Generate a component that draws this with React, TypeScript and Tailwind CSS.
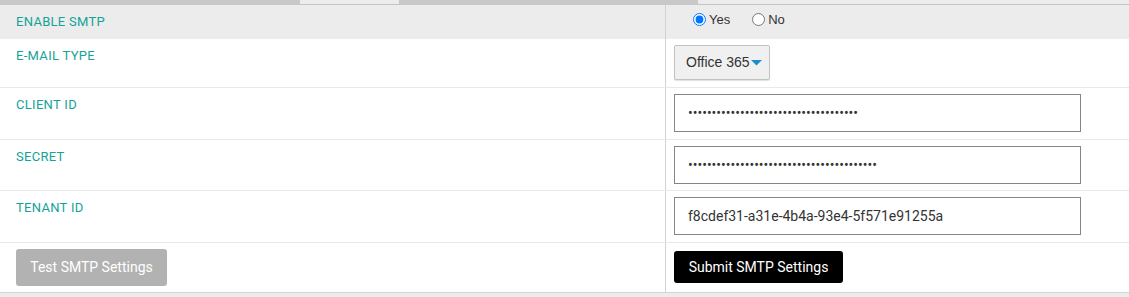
import React from "react";

const labelCls =
  "font-['Roboto',sans-serif] text-[13px] leading-[19px] tracking-[0.3px] text-[#14a398] uppercase";

function Row({
  h,
  bg,
  border,
  label,
  children,
  rightPt,
}: {
  h: string;
  bg?: string;
  border?: boolean;
  label?: string;
  children?: React.ReactNode;
  rightPt: string;
}) {
  return (
    <div className={`flex ${h} ${bg ?? ""} ${border ? "border-b border-[#e9e9e9]" : ""}`}>
      <div className="w-[666px] shrink-0 border-r border-[#d2d2d2] pl-4 pt-[7px]">
        {label && <div className={labelCls}>{label}</div>}
      </div>
      <div className={`flex-1 pl-2 ${rightPt}`}>{children}</div>
    </div>
  );
}

export default function App() {
  const inputCls =
    "block w-[407px] h-[38px] border border-[#858585] bg-white px-[13px] font-['Roboto',sans-serif] text-[14px] text-[#333] outline-none";
  return (
    <div className="w-[1129px] h-[297px] bg-[#ececec] overflow-hidden font-['Roboto',sans-serif]">
      <div className="flex h-[5px]">
        <div className="w-[300px] bg-[#c8c8c8]" />
        <div className="w-[99px] bg-[#ececec] border-b border-[#c4c4c4]" />
        <div className="w-[299px] bg-[#c8c8c8]" />
        <div className="flex-1 bg-[#ececec] border-b border-[#c4c4c4]" />
      </div>
      <div className="bg-white border-b border-[#d4d4d4]">
        <Row h="h-[34px]" bg="bg-[#ececec]" label="Enable SMTP" rightPt="pt-[8px]">
          <div className="flex items-center pl-[19px] font-['Liberation_Sans',Arial,sans-serif] text-[13px] text-[#333]">
            <label className="flex items-center gap-[3px]">
              <input type="radio" name="smtp" defaultChecked className="m-0 w-[13px] h-[13px]" />
              <span className="leading-[13px]">Yes</span>
            </label>
            <label className="flex items-center gap-[3px] ml-[22px]">
              <input type="radio" name="smtp" className="m-0 w-[13px] h-[13px]" />
              <span className="leading-[13px]">No</span>
            </label>
          </div>
        </Row>
        <Row h="h-[49px]" border label="E-mail Type" rightPt="pt-[6px]">
          <button className="flex items-center w-[96px] h-[35px] pl-[11px] bg-[#f0f0f0] border border-[#c2c2c2] rounded-[2px] shadow-[0_1px_1px_rgba(0,0,0,0.12)] font-['Liberation_Sans',Arial,sans-serif] text-[14px] text-[#333]">
            <span>Office 365</span>
            <svg width="11" height="6" viewBox="0 0 11 6" className="ml-[1px]">
              <path d="M0 0 L11 0 L5.5 5.5 Z" fill="#1b8ccc" />
            </svg>
          </button>
        </Row>
        <Row h="h-[52px]" border label="Client ID" rightPt="pt-[6px]">
          <input
            type="password"
            readOnly
            defaultValue="abcdefghijklmnopqrstuvwxyz0123456789"
            className={inputCls}
          />
        </Row>
        <Row h="h-[51px]" border label="Secret" rightPt="pt-[6px]">
          <input
            type="password"
            readOnly
            defaultValue="abcdefghijklmnopqrstuvwxyz01234567890123"
            className={inputCls}
          />
        </Row>
        <Row h="h-[52px]" border label="Tenant ID" rightPt="pt-[6px]">
          <input
            type="text"
            readOnly
            defaultValue="f8cdef31-a31e-4b4a-93e4-5f571e91255a"
            className={inputCls}
          />
        </Row>
        <div className="flex h-[49px]">
          <div className="w-[666px] shrink-0 border-r border-[#d2d2d2] pl-4 pt-[6px]">
            <button className="w-[151px] h-[37px] rounded-[3px] bg-[#b2b2b2] text-white text-[14px] font-['Roboto',sans-serif]">
              Test SMTP Settings
            </button>
          </div>
          <div className="flex-1 pl-2 pt-[8px]">
            <button className="w-[169px] h-[32px] rounded-[3px] bg-black text-white text-[14px] font-['Roboto',sans-serif]">
              Submit SMTP Settings
            </button>
          </div>
        </div>
      </div>
    </div>
  );
}
